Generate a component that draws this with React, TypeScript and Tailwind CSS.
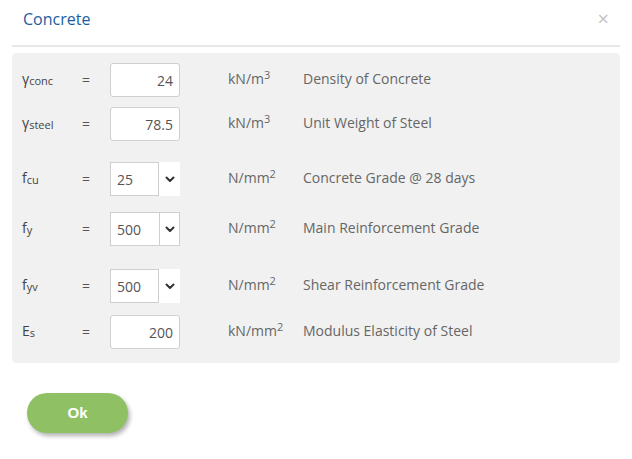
import React from "react";

type Row = {
  sym: string;
  sub: string;
  value: string;
  kind: "input" | "select";
  open?: boolean;
  unit: string;
  pow: string;
  desc: string;
  mt: string;
};

const rows: Row[] = [
  { sym: "γ", sub: "conc", value: "24", kind: "input", unit: "kN/m", pow: "3", desc: "Density of Concrete", mt: "mt-[9px]" },
  { sym: "γ", sub: "steel", value: "78.5", kind: "input", unit: "kN/m", pow: "3", desc: "Unit Weight of Steel", mt: "mt-[10px]" },
  { sym: "f", sub: "cu", value: "25", kind: "select", unit: "N/mm", pow: "2", desc: "Concrete Grade @ 28 days", mt: "mt-[21px]" },
  { sym: "f", sub: "y", value: "500", kind: "select", open: true, unit: "N/mm", pow: "2", desc: "Main Reinforcement Grade", mt: "mt-[16px]" },
  { sym: "f", sub: "yv", value: "500", kind: "select", unit: "N/mm", pow: "2", desc: "Shear Reinforcement Grade", mt: "mt-[23px]" },
  { sym: "E", sub: "s", value: "200", kind: "input", unit: "kN/mm", pow: "2", desc: "Modulus Elasticity of Steel", mt: "mt-[12px]" },
];

function Chevron() {
  return (
    <svg width="10" height="7" viewBox="0 0 10 7" fill="none">
      <path d="M1.5 1.5 L5 5 L8.5 1.5" stroke="#333" strokeWidth="2" strokeLinecap="round" strokeLinejoin="round" />
    </svg>
  );
}

function Field({ row }: { row: Row }) {
  if (row.kind === "input") {
    return (
      <div className="w-[70px] h-[34px] bg-white border border-[#cfcfcf] rounded-[3px] flex items-center justify-end pr-[6px] text-[14px] text-[#555]">
        {row.value}
      </div>
    );
  }
  return (
    <div
      className={
        row.open
          ? "w-[70px] h-[34px] bg-white flex border border-[#cfcfcf]"
          : "w-[70px] h-[34px] bg-white flex"
      }
    >
      <div
        className={
          row.open
            ? "w-[49px] h-full border-r border-[#cfcfcf] flex items-center pl-[6px] text-[14px] text-[#555]"
            : "w-[49px] h-full border border-[#cfcfcf] flex items-center pl-[6px] text-[14px] text-[#555]"
        }
      >
        {row.value}
      </div>
      <div className="flex-1 flex items-center justify-center">
        <Chevron />
      </div>
    </div>
  );
}

export default function App() {
  return (
    <div className="w-[632px] h-[459px] bg-white px-3 font-['Open_Sans',sans-serif]">
      <div className="h-[45px] flex items-start justify-between pt-[8px] pl-[11px] pr-[11px]">
        <h1 className="text-[16px] leading-[22px] text-[#1a5e9f]">Concrete</h1>
        <span className="text-[20px] leading-[22px] text-[#c4c4c4]">×</span>
      </div>
      <div className="h-[2px] bg-[#e8e8e8]" />

      <div className="mt-[6px] bg-[#f1f1f1] rounded-[4px] pl-[10px] pb-[14px] pt-px">
        {rows.map((r) => (
          <div key={r.desc} className={`${r.mt} h-[34px] flex items-center`}>
            <div className="w-[59px] text-[14px] text-[#444] flex items-baseline -mt-[3px]">
              <span>{r.sym}</span>
              <span className="text-[11px] relative top-[1px]">{r.sub}</span>
            </div>
            <div className="w-[29px] text-[14px] text-[#555] pl-[1px] -mt-[2px]">=</div>
            <Field row={r} />
            <div className="ml-[48px] w-[75px] text-[14px] text-[#666] -mt-[3px]">
              {r.unit}
              <sup className="text-[11px]">{r.pow}</sup>
            </div>
            <div className="text-[14px] text-[#666] -mt-[3px]">{r.desc}</div>
          </div>
        ))}
      </div>

      <button className="mt-[30px] ml-[15px] w-[101px] h-[40px] rounded-full bg-[#8fc164] text-white text-[15px] font-bold font-['Liberation_Sans',sans-serif] shadow-[2px_3px_4px_rgba(0,0,0,0.3)]">
        Ok
      </button>
    </div>
  );
}
